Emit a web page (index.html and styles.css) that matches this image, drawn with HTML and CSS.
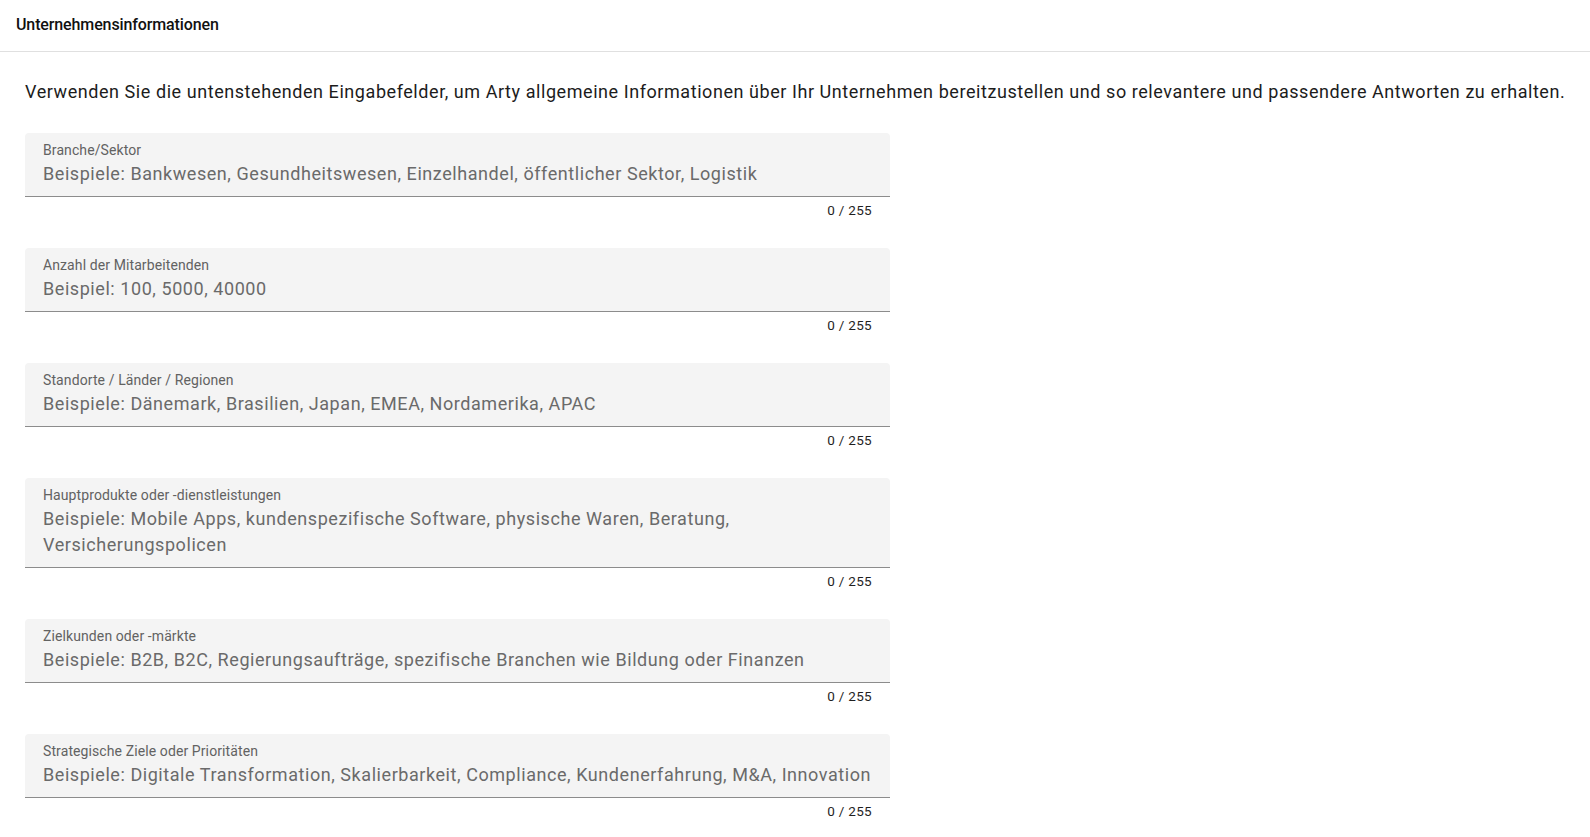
FILE: index.html
```html
<!DOCTYPE html>
<html lang="de">
<head>
<meta charset="utf-8">
<title>Unternehmensinformationen</title>
<link rel="stylesheet" href="styles.css">
</head>
<body>
<header class="topbar"><h1 class="title">Unternehmensinformationen</h1></header>
<main class="content">
  <p class="intro">Verwenden Sie die untenstehenden Eingabefelder, um Arty allgemeine Informationen über Ihr Unternehmen bereitzustellen und so relevantere und passendere Antworten zu erhalten.</p>
  <div class="field">
    <div class="box"><span class="label">Branche/Sektor</span><span class="input">Beispiele: Bankwesen, Gesundheitswesen, Einzelhandel, öffentlicher Sektor, Logistik</span></div>
    <div class="hint">0 / 255</div>
  </div>
  <div class="field">
    <div class="box"><span class="label">Anzahl der Mitarbeitenden</span><span class="input">Beispiel: 100, 5000, 40000</span></div>
    <div class="hint">0 / 255</div>
  </div>
  <div class="field">
    <div class="box"><span class="label">Standorte / Länder / Regionen</span><span class="input">Beispiele: Dänemark, Brasilien, Japan, EMEA, Nordamerika, APAC</span></div>
    <div class="hint">0 / 255</div>
  </div>
  <div class="field">
    <div class="box"><span class="label">Hauptprodukte oder -dienstleistungen</span><span class="input">Beispiele: Mobile Apps, kundenspezifische Software, physische Waren, Beratung,<br>Versicherungspolicen</span></div>
    <div class="hint">0 / 255</div>
  </div>
  <div class="field">
    <div class="box"><span class="label">Zielkunden oder -märkte</span><span class="input">Beispiele: B2B, B2C, Regierungsaufträge, spezifische Branchen wie Bildung oder Finanzen</span></div>
    <div class="hint">0 / 255</div>
  </div>
  <div class="field">
    <div class="box"><span class="label">Strategische Ziele oder Prioritäten</span><span class="input single">Beispiele: Digitale Transformation, Skalierbarkeit, Compliance, Kundenerfahrung, M&amp;A, Innovation</span></div>
    <div class="hint">0 / 255</div>
  </div>
</main>
</body>
</html>
```
FILE: styles.css
```css
html, body {
  margin: 0;
  padding: 0;
  background: #ffffff;
  font-family: Roboto, "Noto Sans", sans-serif;
  color: #1f1f1f;
}
.topbar {
  height: 51px;
  border-bottom: 1px solid #e0e0e0;
  display: flex;
  align-items: center;
  padding: 0 16px;
}
.title {
  margin: 0;
  font-size: 16px;
  letter-spacing: -0.12px;
  font-weight: 500;
  color: #111;
  position: relative;
  top: -1px;
}
.content {
  padding: 0 10px 0 25px;
}
.intro {
  margin: 27px 0 28px;
  font-size: 18px;
  line-height: 26px;
  letter-spacing: 0.03125em;
  color: #1c1c1c;
  white-space: nowrap;
}
.field {
  width: 865px;
  margin-bottom: 30px;
}
.box {
  background: #f4f4f4;
  border-radius: 4px 4px 0 0;
  border-bottom: 1px solid #8c8c8c;
  padding: 9px 16px 9px 18px;
  display: flex;
  flex-direction: column;
}
.label {
  font-size: 14px;
  line-height: 16px;
  color: #626262;
  letter-spacing: 0.1px;
  margin-bottom: 3px;
}
.input {
  font-size: 18px;
  line-height: 26px;
  letter-spacing: 0.03125em;
  color: #6a6a6a;
}
.single {
  white-space: nowrap;
}
.hint {
  margin-top: 5px;
  padding-right: 18px;
  text-align: right;
  font-size: 13.5px;
  line-height: 16px;
  letter-spacing: 0.3px;
  color: #1f1f1f;
}
```
